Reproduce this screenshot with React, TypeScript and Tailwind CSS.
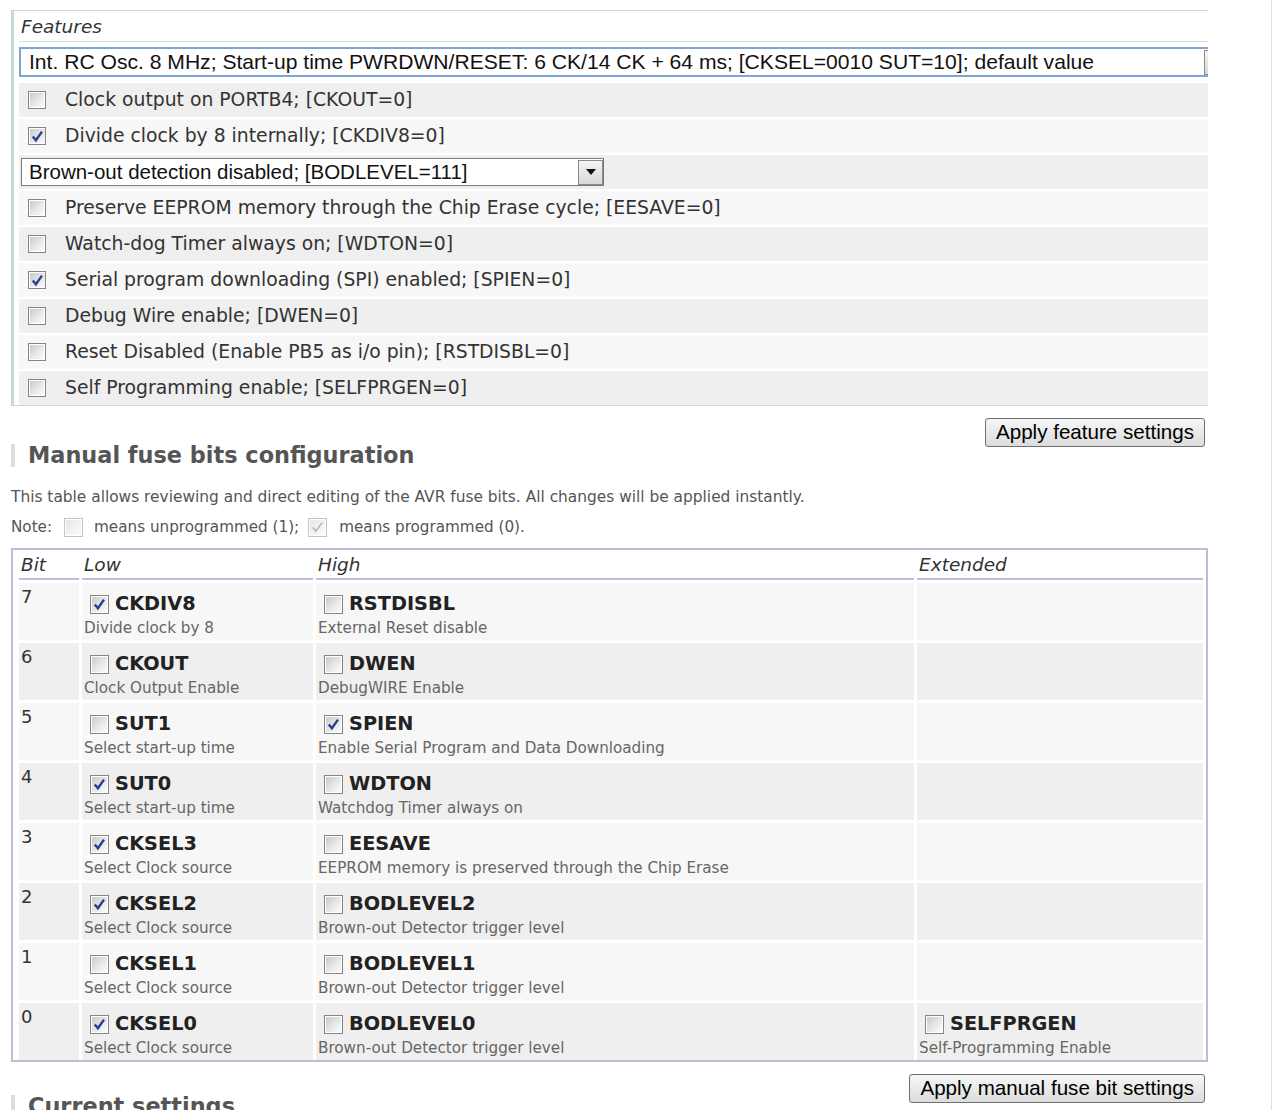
import React from "react";

function Check({ checked, disabled, size }: { checked?: boolean; disabled?: boolean; size: "s" | "m" }) {
  const dim = size === "s" ? "w-[18px] h-[18px]" : "w-[19px] h-[19px]";
  const outer = disabled ? "border-[#c4c4c4]" : "border-[#858585]";
  const inner = disabled
    ? "bg-gradient-to-br from-[#e6e6e6] to-[#fbfbfb]"
    : "bg-gradient-to-br from-[#c9c9c9] via-[#e6e6e6] to-[#fbfbfb]";
  return (
    <span className={`${dim} ${outer} border shrink-0 bg-white p-[1px] flex`}>
      <span className={`${inner} flex-1 flex items-center justify-center`}>
        {checked && (
          <svg viewBox="0 0 16 16" className="w-[15px] h-[15px]">
            <path
              d="M3 8 L6.3 12 L12.8 2.8"
              fill="none"
              stroke={disabled ? "#b4b4b4" : "#2c3d8f"}
              strokeWidth={disabled ? 1.6 : 2.6}
            />
          </svg>
        )}
      </span>
    </span>
  );
}

const featureRows: ({ t: "cb"; c: boolean; text: string } | { t: "sel" })[] = [
  { t: "cb", c: false, text: "Clock output on PORTB4; [CKOUT=0]" },
  { t: "cb", c: true, text: "Divide clock by 8 internally; [CKDIV8=0]" },
  { t: "sel" },
  { t: "cb", c: false, text: "Preserve EEPROM memory through the Chip Erase cycle; [EESAVE=0]" },
  { t: "cb", c: false, text: "Watch-dog Timer always on; [WDTON=0]" },
  { t: "cb", c: true, text: "Serial program downloading (SPI) enabled; [SPIEN=0]" },
  { t: "cb", c: false, text: "Debug Wire enable; [DWEN=0]" },
  { t: "cb", c: false, text: "Reset Disabled (Enable PB5 as i/o pin); [RSTDISBL=0]" },
  { t: "cb", c: false, text: "Self Programming enable; [SELFPRGEN=0]" },
];

type Fuse = { name: string; c: boolean; desc: string } | null;
const fuseRows: { bit: string; low: Fuse; high: Fuse; ext: Fuse }[] = [
  { bit: "7", low: { name: "CKDIV8", c: true, desc: "Divide clock by 8" }, high: { name: "RSTDISBL", c: false, desc: "External Reset disable" }, ext: null },
  { bit: "6", low: { name: "CKOUT", c: false, desc: "Clock Output Enable" }, high: { name: "DWEN", c: false, desc: "DebugWIRE Enable" }, ext: null },
  { bit: "5", low: { name: "SUT1", c: false, desc: "Select start-up time" }, high: { name: "SPIEN", c: true, desc: "Enable Serial Program and Data Downloading" }, ext: null },
  { bit: "4", low: { name: "SUT0", c: true, desc: "Select start-up time" }, high: { name: "WDTON", c: false, desc: "Watchdog Timer always on" }, ext: null },
  { bit: "3", low: { name: "CKSEL3", c: true, desc: "Select Clock source" }, high: { name: "EESAVE", c: false, desc: "EEPROM memory is preserved through the Chip Erase" }, ext: null },
  { bit: "2", low: { name: "CKSEL2", c: true, desc: "Select Clock source" }, high: { name: "BODLEVEL2", c: false, desc: "Brown-out Detector trigger level" }, ext: null },
  { bit: "1", low: { name: "CKSEL1", c: false, desc: "Select Clock source" }, high: { name: "BODLEVEL1", c: false, desc: "Brown-out Detector trigger level" }, ext: null },
  { bit: "0", low: { name: "CKSEL0", c: true, desc: "Select Clock source" }, high: { name: "BODLEVEL0", c: false, desc: "Brown-out Detector trigger level" }, ext: { name: "SELFPRGEN", c: false, desc: "Self-Programming Enable" } },
];

function Arrow() {
  return (
    <span className="w-[25px] h-[25px] border border-[#8a8a8a] bg-gradient-to-b from-[#f4f4f4] to-[#d9d9d9] flex items-center justify-center shrink-0">
      <svg viewBox="0 0 10 6" className="w-[10px] h-[6px]">
        <path d="M0 0 L10 0 L5 6 Z" fill="#111" />
      </svg>
    </span>
  );
}

function FuseCell({ f, bg }: { f: Fuse; bg: string }) {
  return (
    <div className={`${bg} pl-[2px] flex flex-col`}>
      {f && (
        <>
          <div className="mt-[10px] h-[22px] flex items-center">
            <span className="ml-[6px]">
              <Check size="m" checked={f.c} />
            </span>
            <span className="ml-[6px] text-[19.3px] font-bold text-[#222] leading-[22px]">{f.name}</span>
          </div>
          <div className="mt-[4px] text-[15.2px] leading-[18px] text-[#666]">{f.desc}</div>
        </>
      )}
    </div>
  );
}

function Button({ children }: { children: React.ReactNode }) {
  return (
    <button className="h-[29px] px-[10px] border border-[#707070] rounded-[3px] bg-gradient-to-b from-[#f7f7f7] to-[#dcdcdc] text-[20.6px] leading-none text-black font-['Liberation_Sans',Arial,sans-serif]">
      {children}
    </button>
  );
}

export default function App() {
  const rows: React.ReactNode[] = [
    <div key="s1" className="h-[37px] pt-[3px] bg-white">
      <div className="w-[1212px] h-[30px] border-2 border-[#7ea5d8] bg-white flex items-center justify-between">
        <span className="pl-[8px] text-[21.1px] text-[#111] font-['Liberation_Sans',Arial,sans-serif] leading-none whitespace-nowrap">
          Int. RC Osc. 8 MHz; Start-up time PWRDWN/RESET: 6 CK/14 CK + 64 ms; [CKSEL=0010 SUT=10]; default value
        </span>
        <Arrow />
      </div>
    </div>,
  ];
  featureRows.forEach((r, i) => {
    const bg = i % 2 === 0 ? "bg-[#efefef]" : "bg-[#f7f7f7]";
    if (r.t === "sel") {
      rows.push(
        <div key={i} className={`h-[34px] ${bg} flex items-center`}>
          <div className="ml-[2px] w-[583px] h-[28px] border border-[#7a7a7a] bg-white flex items-center justify-between">
            <span className="pl-[7px] text-[20.5px] text-[#111] font-['Liberation_Sans',Arial,sans-serif] leading-none">
              Brown-out detection disabled; [BODLEVEL=111]
            </span>
            <Arrow />
          </div>
        </div>
      );
    } else {
      rows.push(
        <div key={i} className={`h-[34px] ${bg} flex items-center`}>
          <span className="ml-[9px]">
            <Check size="s" checked={r.c} />
          </span>
          <span className="ml-[19px] text-[18.8px] text-[#333] whitespace-nowrap">{r.text}</span>
        </div>
      );
    }
  });

  return (
    <div className="w-[1280px] h-[1110px] overflow-hidden bg-white flex font-['DejaVu_Sans',Verdana,sans-serif] text-[#333]">
      <div className="w-[1208px] shrink-0 overflow-hidden">
        <div className="pt-[10px]">
          <div className="ml-[11px] w-[1240px] border-t border-b border-l-[3px] border-[#c9d8d8] pl-[5px] flex flex-col gap-[2px]">
            <div className="h-[31px] border-b border-[#d2dede] pl-[2px] pt-[2px] flex items-center italic text-[18.5px] text-[#333]">
              Features
            </div>
            {rows}
          </div>
        </div>

        <div className="float-right mt-[12px] mr-[3px]">
          <Button>Apply feature settings</Button>
        </div>

        <div className="mt-[38px] ml-[11px] h-[23px] border-l-4 border-[#dcdcdc] pl-[13px] text-[22.4px] leading-[23px] font-bold text-[#555]">
          Manual fuse bits configuration
        </div>

        <p className="mt-[21px] ml-[11px] text-[15.4px] leading-[18px] text-[#555] whitespace-nowrap">
          This table allows reviewing and direct editing of the AVR fuse bits. All changes will be applied instantly.
        </p>

        <div className="mt-[10px] ml-[11px] h-[22px] flex items-center text-[15.2px] text-[#555]">
          <span>Note:</span>
          <span className="ml-[12px] mr-[11px]">
            <Check size="m" disabled />
          </span>
          <span>means unprogrammed (1);</span>
          <span className="ml-[9px] mr-[12px]">
            <Check size="m" disabled checked />
          </span>
          <span>means programmed (0).</span>
        </div>

        <div className="mt-[10px] ml-[11px] w-[1197px] border-2 border-[#bdbdd5] pl-[6px] pr-[3px]">
          <div className="grid grid-cols-[60px_231px_598px_1fr] grid-rows-[30px_repeat(8,57px)] gap-x-[3px] gap-y-[3px]">
            {["Bit", "Low", "High", "Extended"].map((h) => (
              <div key={h} className="h-[30px] border-b-2 border-[#bdbdd5] pl-[2px] italic text-[18.5px] leading-[30px] text-[#333]">
                {h}
              </div>
            ))}
            {fuseRows.map((r, i) => {
              const bg = i % 2 === 0 ? "bg-[#f7f7f7]" : "bg-[#efefef]";
              return (
                <React.Fragment key={r.bit}>
                  <div className={`${bg} pl-[2px] pt-[3px] text-[18px] leading-[22px] text-[#333]`}>{r.bit}</div>
                  <FuseCell f={r.low} bg={bg} />
                  <FuseCell f={r.high} bg={bg} />
                  <FuseCell f={r.ext} bg={bg} />
                </React.Fragment>
              );
            })}
          </div>
        </div>

        <div className="float-right mt-[12px] mr-[3px]">
          <Button>Apply manual fuse bit settings</Button>
        </div>

        <div className="mt-[33px] ml-[11px] h-[23px] border-l-4 border-[#dcdcdc] pl-[13px] text-[22.4px] leading-[23px] font-bold text-[#555]">
          Current settings
        </div>
      </div>
      <div className="w-[64px] shrink-0 border-r border-[#dedede]" />
    </div>
  );
}
